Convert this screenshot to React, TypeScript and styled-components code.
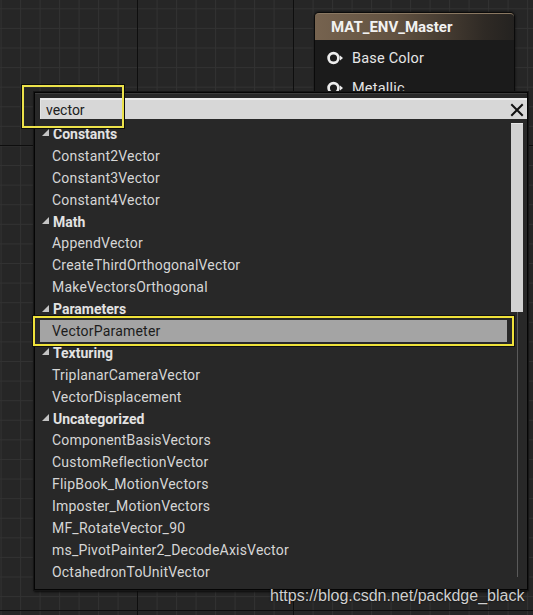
import React from "react";
import styled, { createGlobalStyle } from "styled-components";

const Global = createGlobalStyle`
  html, body { margin: 0; padding: 0; background: #262626; }
  body { font-family: Roboto, "Noto Sans", sans-serif; }
`;

const Canvas = styled.div`
  position: relative;
  width: 533px;
  height: 615px;
  overflow: hidden;
  background-color: #262626;
  background-image:
    linear-gradient(to right, transparent 137px, #0e0e0e 137px, #0e0e0e 138px, transparent 138px, transparent 293px, #0e0e0e 293px, #0e0e0e 294px, transparent 294px),
    linear-gradient(to bottom, transparent 145px, #0e0e0e 145px, #0e0e0e 146px, transparent 146px, transparent 610px, #0e0e0e 610px, #0e0e0e 611px, transparent 611px),
    linear-gradient(to right, #323232 1px, transparent 1px),
    linear-gradient(to bottom, #323232 1px, transparent 1px);
  background-size: 100% 100%, 100% 100%, 19.5px 19.6px, 19.5px 19.6px;
  background-position: 0 0, 0 0, 0.6px 0, 0 8.3px;
  background-repeat: no-repeat, no-repeat, repeat, repeat;
`;

const Node = styled.div`
  position: absolute;
  left: 314px;
  top: 12px;
  width: 201px;
  height: 120px;
  box-sizing: border-box;
  border-radius: 5px 5px 0 0;
  background: #1b1b1b;
  border: 1px solid #0a0a0a;
  box-shadow: 0 0 3px rgba(0, 0, 0, 0.7);
  display: flex;
  flex-direction: column;
`;

const NodeHeader = styled.div`
  height: 26px;
  border-radius: 4px 4px 0 0;
  background: linear-gradient(to right, #76634f 0%, #625241 40%, #2f2a25 85%, #242220 100%);
  border-top: 1px solid #8a7862;
  display: flex;
  align-items: center;
  padding-left: 16px;
  color: #f2f2f2;
  font-weight: 700;
  font-size: 15px;
`;

const PinList = styled.div`
  display: flex;
  flex-direction: column;
  padding: 7px 0 0 12px;
  gap: 8px;
`;

const Pin = styled.div`
  display: flex;
  align-items: center;
  height: 22px;
  gap: 8px;
  color: #e6e6e6;
  font-size: 14.5px;
  letter-spacing: 0.2px;
`;

const PinIcon = () => (
  <svg width="17" height="14" viewBox="0 0 17 14">
    <circle cx="6.5" cy="7" r="4.9" fill="none" stroke="#ececec" strokeWidth="2.7" />
    <polygon points="13,4.6 16,7 13,9.4" fill="#ececec" />
  </svg>
);

const Panel = styled.div`
  position: absolute;
  left: 34px;
  top: 92px;
  width: 494px;
  height: 498px;
  background: #282828;
  border: 1px solid #050505;
  box-shadow: inset 0 1px 0 #3c3c3c, 0 0 0 1px #161616, 0 2px 2px #0a0a0a;
  display: flex;
  flex-direction: column;
  padding: 5px 0 0 5px;
  box-sizing: border-box;
`;

const SearchBox = styled.div`
  height: 21px;
  width: 487px;
  box-sizing: border-box;
  background: #d7d7d7;
  border-top: 2px solid #ececec;
  border-left: 1px solid #e4e4e4;
  display: flex;
  align-items: center;
  justify-content: space-between;
  padding: 0 3px 0 5px;
  color: #202020;
  font-size: 14px;
`;

const Body = styled.div`
  display: flex;
  flex: 1;
  padding-top: 4px;
  min-height: 0;
`;

const List = styled.div`
  width: 467px;
  display: flex;
  flex-direction: column;
`;

const Row = styled.div<{ $cat?: boolean; $selected?: boolean }>`
  position: relative;
  height: 21.9px;
  display: flex;
  align-items: center;
  padding-left: ${(p) => (p.$cat ? "1px" : "12px")};
  gap: 3px;
  font-size: 14px;
  white-space: nowrap;
  letter-spacing: ${(p) => (p.$cat ? "0" : "0.2px")};
  font-weight: ${(p) => (p.$cat ? 700 : 400)};
  color: ${(p) => (p.$selected ? "#1c1c1c" : p.$cat ? "#e2e2e2" : "#d6d6d6")};
  background: ${(p) => (p.$selected ? "#a4a4a4" : "transparent")};
  ${(p) =>
    p.$selected &&
    `
    &::after {
      content: "";
      position: absolute;
      left: -7px;
      right: -7px;
      top: -4px;
      bottom: -4px;
      border: 2px solid #efe23a;
      box-shadow: 0 0 0 1px #111;
    }
  `}
`;

const ScrollCol = styled.div`
  width: 12px;
  margin-left: 4px;
  display: flex;
  flex-direction: column;
  align-items: center;
`;

const Thumb = styled.div`
  width: 12px;
  height: 189px;
  background: #d2d2d2;
  border-top: 1px solid #e6e6e6;
  box-sizing: border-box;
`;

const Track = styled.div`
  width: 1px;
  height: 265px;
  background: #5a5a5a;
`;

const SearchHighlight = styled.div`
  position: absolute;
  left: 22px;
  top: 85px;
  width: 102px;
  height: 43px;
  box-sizing: border-box;
  border: 2px solid #ece24a;
  box-shadow: 0 0 0 1px #0c0c0c;
`;

const Watermark = styled.div`
  position: absolute;
  left: 270px;
  top: 587px;
  font-family: "Liberation Sans", Arial, sans-serif;
  font-size: 16px;
  color: #cfcfcf;
  text-shadow: 0 0 2px #000;
  white-space: nowrap;
`;

const Tri = () => (
  <svg width="9" height="9" viewBox="0 0 9 9" style={{ marginTop: -2 }}>
    <polygon points="8,1 8,8 1,8" fill="#c4c4c4" />
  </svg>
);

const CloseIcon = () => (
  <svg width="14" height="14" viewBox="0 0 14 14">
    <path d="M2 2 L12 12 M12 2 L2 12" stroke="#111" strokeWidth="2" strokeLinecap="square" />
  </svg>
);

type Item = { t: string; cat?: boolean; sel?: boolean };

const items: Item[] = [
  { t: "Constants", cat: true },
  { t: "Constant2Vector" },
  { t: "Constant3Vector" },
  { t: "Constant4Vector" },
  { t: "Math", cat: true },
  { t: "AppendVector" },
  { t: "CreateThirdOrthogonalVector" },
  { t: "MakeVectorsOrthogonal" },
  { t: "Parameters", cat: true },
  { t: "VectorParameter", sel: true },
  { t: "Texturing", cat: true },
  { t: "TriplanarCameraVector" },
  { t: "VectorDisplacement" },
  { t: "Uncategorized", cat: true },
  { t: "ComponentBasisVectors" },
  { t: "CustomReflectionVector" },
  { t: "FlipBook_MotionVectors" },
  { t: "Imposter_MotionVectors" },
  { t: "MF_RotateVector_90" },
  { t: "ms_PivotPainter2_DecodeAxisVector" },
  { t: "OctahedronToUnitVector" },
];

export default function App() {
  return (
    <>
      <Global />
      <Canvas>
        <Node>
          <NodeHeader>MAT_ENV_Master</NodeHeader>
          <PinList>
            <Pin>
              <PinIcon />
              Base Color
            </Pin>
            <Pin>
              <PinIcon />
              Metallic
            </Pin>
          </PinList>
        </Node>
        <Panel>
          <SearchBox>
            <span>vector</span>
            <CloseIcon />
          </SearchBox>
          <Body>
            <List>
              {items.map((it) => (
                <Row key={it.t} $cat={it.cat} $selected={it.sel}>
                  {it.cat && <Tri />}
                  {it.t}
                </Row>
              ))}
            </List>
            <ScrollCol>
              <Thumb />
              <Track />
            </ScrollCol>
          </Body>
        </Panel>
        <SearchHighlight />
        <Watermark>https://blog.csdn.net/packdge_black</Watermark>
      </Canvas>
    </>
  );
}
